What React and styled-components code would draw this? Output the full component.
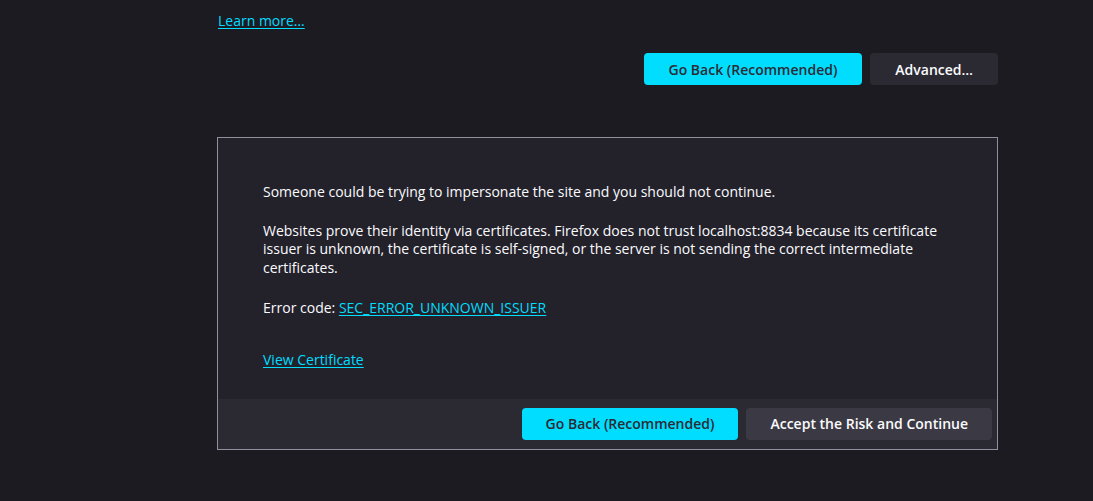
import React from 'react'
import styled, { createGlobalStyle } from 'styled-components'

const GlobalStyle = createGlobalStyle`
  html, body {
    margin: 0;
    padding: 0;
    background-color: #1c1b22;
    color: #fbfbfe;
    font-family: "Open Sans", "Noto Sans", sans-serif;
  }
`

const Page = styled.div`
  width: 781px;
  padding: 9px 0 0 217px;
`

const Intro = styled.div`
  padding-left: 1px;
`

const Link = styled.a`
  color: #00ddff;
  text-decoration: underline;
  text-underline-offset: 2px;
  font-size: 14px;
  cursor: pointer;
`

const ButtonRow = styled.div`
  display: flex;
  justify-content: flex-end;
  gap: 8px;
  padding: ${(props) => props.padding || '0'};
  margin-top: ${(props) => props.top || '0'};
  background-color: ${(props) => props.bg || 'transparent'};
`

const Button = styled.button`
  height: 32px;
  padding: 0 ${(props) => props.pad || '25px'};
  border: none;
  border-radius: 4px;
  font-family: inherit;
  font-size: 14px;
  font-weight: 600;
  background-color: ${(props) => (props.primary ? '#00ddff' : props.bg || '#2b2a33')};
  color: ${(props) => (props.primary ? '#2b2a33' : '#fbfbfe')};
  cursor: pointer;
`

const Panel = styled.div`
  margin-top: 52px;
  border: 1px solid #8f8f9d;
  background-color: #23222b;
`

const PanelBody = styled.div`
  padding: 45px 45px 29px 45px;
  font-size: 14px;
  line-height: 18.6px;
`

const Para = styled.p`
  margin: 0 0 ${(props) => props.gap || '20px'} 0;
`

export default function App() {
  return (
    <>
      <GlobalStyle />
      <Page>
        <Intro>
          <Link>Learn more…</Link>
        </Intro>
        <ButtonRow top="22px">
          <Button primary>Go Back (Recommended)</Button>
          <Button>Advanced…</Button>
        </ButtonRow>
        <Panel>
          <PanelBody>
            <Para>Someone could be trying to impersonate the site and you should not continue.</Para>
            <Para gap="22px">
              Websites prove their identity via certificates. Firefox does not trust localhost:8834 because its
              certificate issuer is unknown, the certificate is self-signed, or the server is not sending the
              correct intermediate certificates.
            </Para>
            <Para gap="33px">
              Error code: <Link>SEC_ERROR_UNKNOWN_ISSUER</Link>
            </Para>
            <Para gap="0">
              <Link>View Certificate</Link>
            </Para>
          </PanelBody>
          <ButtonRow padding="9px 5px 9px 0" bg="#2b2a33">
            <Button primary pad="24px">Go Back (Recommended)</Button>
            <Button pad="24px" bg="#3b3a44">Accept the Risk and Continue</Button>
          </ButtonRow>
        </Panel>
      </Page>
    </>
  )
}
